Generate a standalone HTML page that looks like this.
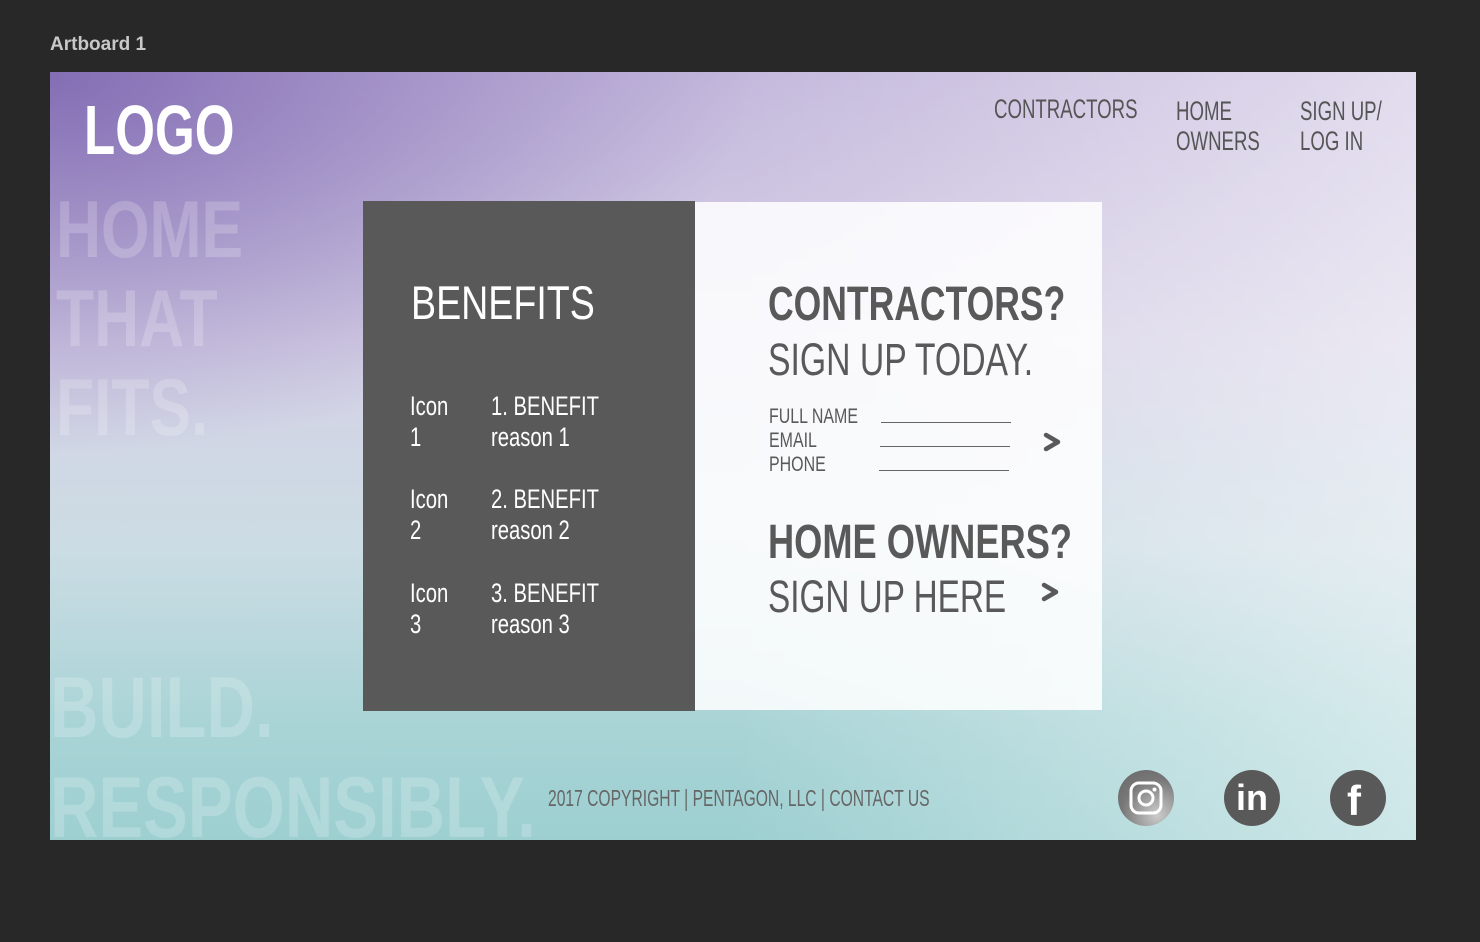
<!DOCTYPE html>
<html><head><meta charset="utf-8"><style>
*{margin:0;padding:0;box-sizing:border-box}
body{width:1480px;height:942px;background:#282828;position:relative;overflow:hidden;font-family:"Liberation Sans",sans-serif}
.t{position:absolute;white-space:nowrap;transform-origin:0 0;line-height:1}
#ab{position:absolute;left:50px;top:72px;width:1366px;height:768px;overflow:hidden;
background:
linear-gradient(90deg,rgba(255,255,255,0) 0%,rgba(255,255,255,0) 50%,rgba(255,255,255,.5) 100%),
radial-gradient(ellipse 700px 380px at 0% 0%,rgba(128,106,178,.95),rgba(128,106,178,0)),
linear-gradient(180deg,#c4b8dc 0%,#d6d1e6 35%,#cbdce4 62%,#a9d4d6 85%,#9dcfd1 100%);}
.wm{color:rgba(255,255,255,.2);font-weight:bold}
.nav{color:#555;font-size:27px;transform:scaleX(.69)}
.bi{color:#fff;font-size:27px;transform:scaleX(.75)}
.ci{position:absolute;width:56px;height:56px;border-radius:50%;background:#595959}
</style></head><body>
<div class="t" style="left:50px;top:35px;color:#c8c8c8;font-size:19px;font-weight:bold">Artboard 1</div>
<div id="ab">
<div class="t" style="left:34px;top:23px;font-size:70px;font-weight:bold;color:#fff;transform:scaleX(.73)">LOGO</div>
<div class="t wm" style="left:6px;top:114px;font-size:81px;line-height:89px;transform:scaleX(.77)">HOME<br>THAT<br>FITS.</div>
<div class="t wm" style="left:0px;top:586px;font-size:86px;line-height:100px;transform:scaleX(.78)">BUILD.<br>RESPONSIBLY.</div>
<div class="t nav" style="left:944px;top:24px">CONTRACTORS</div>
<div class="t nav" style="left:1126px;top:24px;line-height:30px">HOME<br>OWNERS</div>
<div class="t nav" style="left:1250px;top:24px;line-height:30px">SIGN UP/<br>LOG IN</div>
<div style="position:absolute;left:313px;top:129px;width:332px;height:510px;background:#595959"></div>
<div style="position:absolute;left:645px;top:130px;width:407px;height:508px;background:rgba(255,255,255,.85)"></div>
<div class="t" style="left:361px;top:207px;font-size:47px;color:#fff;transform:scaleX(.8)">BENEFITS</div>
<div class="t bi" style="left:360px;top:319px;line-height:31px">Icon<br>1</div>
<div class="t bi" style="left:441px;top:319px;line-height:31px">1. BENEFIT<br>reason 1</div>
<div class="t bi" style="left:360px;top:412px;line-height:31px">Icon<br>2</div>
<div class="t bi" style="left:441px;top:412px;line-height:31px">2. BENEFIT<br>reason 2</div>
<div class="t bi" style="left:360px;top:506px;line-height:31px">Icon<br>3</div>
<div class="t bi" style="left:441px;top:506px;line-height:31px">3. BENEFIT<br>reason 3</div>
<div class="t" style="left:718px;top:209px;font-size:48px;font-weight:bold;color:#595959;transform:scaleX(.74)">CONTRACTORS?</div>
<div class="t" style="left:718px;top:265px;font-size:45px;color:#595959;transform:scaleX(.75)">SIGN UP TODAY.</div>
<div class="t" style="left:719px;top:333px;font-size:21px;line-height:24px;color:#595959;transform:scaleX(.76)">FULL NAME<br>EMAIL<br>PHONE</div>
<div style="position:absolute;left:831px;top:350px;width:130px;border-top:1px solid #666"></div>
<div style="position:absolute;left:830px;top:374px;width:130px;border-top:1px solid #666"></div>
<div style="position:absolute;left:829px;top:398px;width:130px;border-top:1px solid #666"></div>
<svg style="position:absolute;left:992px;top:359px" width="20" height="22"><path d="M4 4 L16 11 L4 18" fill="none" stroke="#595959" stroke-width="4.5" stroke-linecap="round" stroke-linejoin="round"/></svg>
<div class="t" style="left:718px;top:447px;font-size:48px;font-weight:bold;color:#595959;transform:scaleX(.755)">HOME OWNERS?</div>
<div class="t" style="left:718px;top:502px;font-size:45px;color:#595959;transform:scaleX(.74)">SIGN UP HERE</div>
<svg style="position:absolute;left:990px;top:509px" width="20" height="22"><path d="M4 4 L16 11 L4 18" fill="none" stroke="#595959" stroke-width="4.5" stroke-linecap="round" stroke-linejoin="round"/></svg>
<div class="t" style="left:498px;top:715px;font-size:23px;color:#666;transform:scaleX(.68)">2017 COPYRIGHT | PENTAGON, LLC | CONTACT US</div>
<div class="ci" style="left:1068px;top:698px;background:radial-gradient(circle at 70% 80%,#ccc,#777 60%,#666)"></div>
<svg style="position:absolute;left:1068px;top:698px" width="56" height="56"><rect x="13" y="13" width="30" height="30" rx="8" fill="none" stroke="#fff" stroke-width="3"/><circle cx="28" cy="28" r="7" fill="none" stroke="#fff" stroke-width="3"/><circle cx="36.5" cy="19.5" r="2" fill="#fff"/></svg>
<div class="ci" style="left:1174px;top:698px"></div>
<div class="t" style="left:1186px;top:708px;font-size:36px;font-weight:bold;color:#fff">in</div>
<div class="ci" style="left:1280px;top:698px"></div>
<div class="t" style="left:1297px;top:708px;font-size:42px;font-weight:bold;color:#fff">f</div>
</div>
</body></html>
